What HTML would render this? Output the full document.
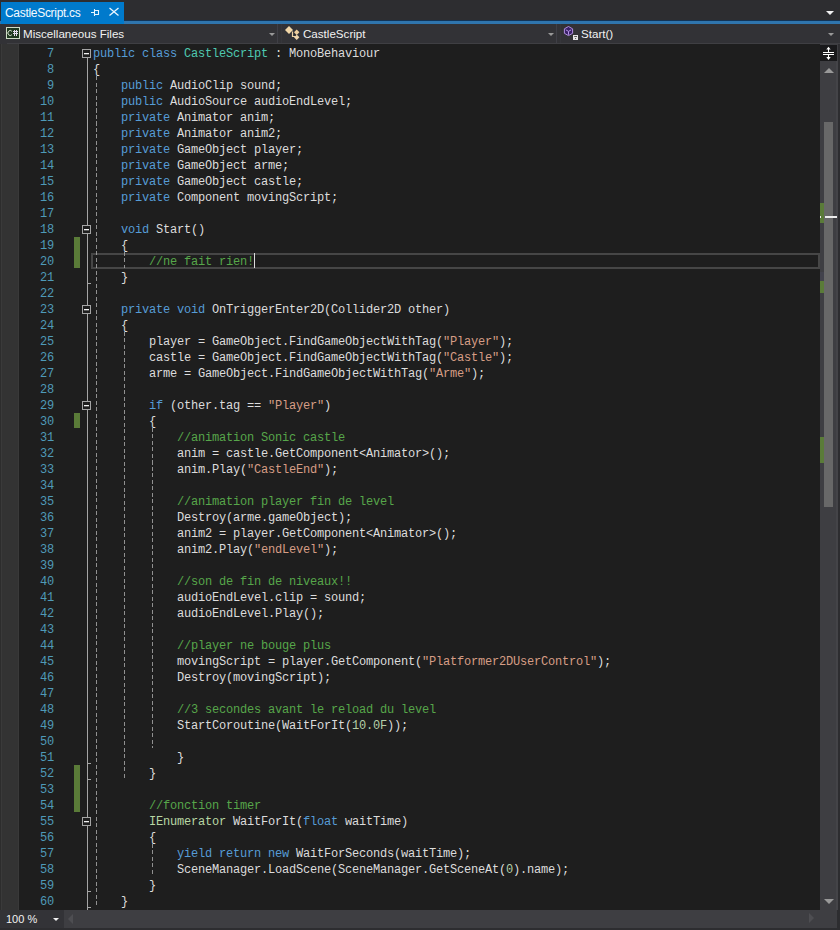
<!DOCTYPE html>
<html><head><meta charset="utf-8">
<style>
*{margin:0;padding:0;box-sizing:border-box}
html,body{width:840px;height:930px;overflow:hidden;background:#2d2d30}
body{position:relative;font-family:"Liberation Sans",sans-serif}
.abs{position:absolute}
/* tab bar */
#tabbar{position:absolute;left:0;top:0;width:840px;height:23px;background:#2d2d30}
#tab{position:absolute;left:1px;top:2px;width:123px;height:22px;background:#007acc}
#tabtxt{position:absolute;left:5px;top:6px;font-size:12px;letter-spacing:-0.3px;color:#f4faff;white-space:nowrap}
#tabline{position:absolute;left:0;top:21px;width:840px;height:3px;background:#2f75ae;border-top:1px solid #123456;top:20px;height:4px}
/* nav bar */
#nav{position:absolute;left:0;top:24px;width:840px;height:20px;background:#323236}
.navtxt{position:absolute;top:27px;font-size:11.6px;color:#f1f1f1;white-space:nowrap}
.sep{position:absolute;top:24px;width:1px;height:19px;background:#3f3f46}
.darr{position:absolute;width:0;height:0;border-left:3px solid transparent;border-right:3px solid transparent;border-top:3px solid #999}
/* editor */
#editor{position:absolute;left:19px;top:44px;width:801px;height:866px;background:#1e1e1e;overflow:hidden}
#glyph{position:absolute;left:0;top:44px;width:19px;height:866px;background:#333333;border-left:1px solid #2d2d2d}
#glyph2{position:absolute;left:1px;top:44px;width:18px;height:866px;border-left:1px solid #3a3a3a;border-right:1px solid #393939}
.ln{position:absolute;left:0;height:16px;width:820px;font-family:"Liberation Mono",monospace;font-size:12px;letter-spacing:-0.2px;line-height:16px;white-space:pre;color:#dcdcdc}
.num{position:absolute;right:766px;top:2px;color:#4f9ab8;text-align:right}
.code{position:absolute;left:93px;top:2px}
.k{color:#569cd6}.t{color:#4ec9b0}.c{color:#57a64a}.s{color:#d69d85}.n{color:#b5cea8}.i{color:#b8d7a3}
.guide{position:absolute;width:1px;background:repeating-linear-gradient(to bottom,#a5a5a5 0,#a5a5a5 4px,transparent 4px,transparent 6.5px);opacity:.85}
.ovl{position:absolute;left:87px;width:1px;background:#a5a5a5}
.obox{position:absolute;left:82px;width:9px;height:9px;border:1px solid #a5a5a5;background:#1e1e1e}
.ominus{position:absolute;left:1px;top:3px;width:5px;height:1px;background:#f0f0f0;box-shadow:0 0.5px 0 #9a9a9a}
.otick{position:absolute;left:87px;width:4px;height:1px;background:#a5a5a5}
.chg{position:absolute;left:74px;width:6px;background:#5a7b38}
#curline{position:absolute;left:91px;top:253px;width:729px;height:16px;border:2px solid #464646}
#caret{position:absolute;left:254px;top:253px;width:1px;height:15px;background:#dcdcdc}
/* vscroll */
#vsb{position:absolute;left:820px;top:44px;width:18px;height:866px;background:#3e3e42}
#vsbr{position:absolute;left:838px;top:44px;width:2px;height:886px;background:#2d2d30}
#vsbl{position:absolute;left:836px;top:61px;width:2px;height:849px;background:#444448}
#split{position:absolute;left:820px;top:45px;width:17px;height:16px;background:#19191b}
#thumb{position:absolute;left:824px;top:122px;width:9px;height:385px;background:#686868}
/* bottom */
#hsb{position:absolute;left:64px;top:910px;width:756px;height:18px;background:#3e3e42}
#zoom{position:absolute;left:0;top:910px;width:64px;height:18px;background:#333337}
#corner{position:absolute;left:820px;top:910px;width:17px;height:18px;background:#3e3e42}
#bottomline{position:absolute;left:0;top:928px;width:840px;height:2px;background:#2d2d30}
</style></head><body>
<div id="tabbar"></div>
<div id="tabline"></div>
<div id="tab"></div>
<div id="tabtxt">CastleScript.cs</div>
<!-- pin icon -->
<svg class="abs" style="left:90px;top:8px" width="10" height="9" viewBox="0 0 10 9"><path d="M1 4.5H4.5M4.5 1V8M4.5 2.5H8.5V6.5H4.5" stroke="#eaf6ff" stroke-width="1.1" fill="none"/></svg>
<!-- close X -->
<svg class="abs" style="left:108px;top:6px" width="12" height="12" viewBox="0 0 12 12"><path d="M1.5 2L10.5 9.5M10.5 2L1.5 9.5" stroke="#eaf6ff" stroke-width="1.3" fill="none"/></svg>
<div class="darr" style="left:826px;top:11px;border-left-width:4px;border-right-width:4px;border-top:4px solid #f1f1f1"></div>

<div id="nav"></div>
<div class="sep" style="left:277px"></div>
<div class="sep" style="left:281px;background:#36363b"></div>
<div class="sep" style="left:556px"></div>
<div class="sep" style="left:560px;background:#36363b"></div>
<!-- C# icon -->
<svg class="abs" style="left:6px;top:27px" width="14" height="12" viewBox="0 0 14 12"><rect x="0.5" y="0.5" width="13" height="11" fill="#1f381f" stroke="#cfdcc6" stroke-width="1"/><path d="M5.9 4.3A2.3 2.5 0 1 0 5.9 7.7" stroke="#dfe8d8" stroke-width="1" fill="none"/><path d="M8.5 3V9M10.5 3V9M7 4.5H12M7 6.5H12" stroke="#e4dcec" stroke-width="1" fill="none"/></svg>
<div class="navtxt" style="left:23px">Miscellaneous Files</div>
<div class="darr" style="left:269px;top:33px"></div>
<!-- class icon -->
<svg class="abs" style="left:282px;top:23px" width="20" height="20" viewBox="282 23 20 20"><path d="M285 30L289 26L293 30L289 34Z" fill="#f2d7a8"/><path d="M292.5 31.5V36.5H295" stroke="#efd3a5" stroke-width="1.2" fill="none"/><path d="M294 32.3L296.7 29.6L299.4 32.3L296.7 35Z" fill="#efcf9e"/><path d="M294 37.3L296.7 34.6L299.4 37.3L296.7 40Z" fill="#efd6ae"/><path d="M294.3 34.2L295.8 35.7" stroke="#1e1e1e" stroke-width="0.8"/></svg>
<div class="navtxt" style="left:303px">CastleScript</div>
<div class="darr" style="left:548px;top:33px"></div>
<!-- method icon -->
<svg class="abs" style="left:560px;top:23px" width="20" height="20" viewBox="560 23 20 20"><path d="M568.5 26.5L572.6 28.8V33.3L568.5 35.6L564.4 33.3V28.8Z" fill="#3a2168" stroke="#b18ee0" stroke-width="1"/><path d="M565.8 29.8L568.5 31.4L571.2 29.8M568.5 31.4V34.8" stroke="#b795e6" stroke-width="1" fill="none"/><rect x="573" y="35" width="5" height="5" fill="#e4e4e4"/><rect x="574.2" y="36.1" width="2.8" height="0.9" fill="#444"/><rect x="575.1" y="38" width="1" height="1" fill="#555"/></svg>
<div class="navtxt" style="left:581px">Start()</div>
<div class="darr" style="left:828px;top:33px"></div>

<div class="abs" style="left:7px;top:43px;width:833px;height:2px;background:#3f3f43"></div>
<div id="glyph"></div>
<div id="glyph2"></div>
<div id="editor"></div>
<div class="abs" style="left:0;top:0">
<div class="chg" style="top:237px;height:31px"></div>
<div class="chg" style="top:413px;height:15px"></div>
<div class="chg" style="top:765px;height:47px"></div>
<div id="curline"></div>
<div class="guide" style="left:96px;top:76px;height:832px"></div>
<div class="guide" style="left:124px;top:252px;height:16px"></div>
<div class="guide" style="left:124px;top:332px;height:448px"></div>
<div class="guide" style="left:152px;top:428px;height:320px"></div>
<div class="guide" style="left:152px;top:844px;height:32px"></div>
<div class="ovl" style="top:58px;height:852px"></div>
<div class="obox" style="top:49px"><div class="ominus"></div></div>
<div class="obox" style="top:225px"><div class="ominus"></div></div>
<div class="obox" style="top:305px"><div class="ominus"></div></div>
<div class="obox" style="top:401px"><div class="ominus"></div></div>
<div class="obox" style="top:817px"><div class="ominus"></div></div>
<div class="otick" style="top:283px"></div>
<div class="otick" style="top:763px"></div>
<div class="otick" style="top:779px"></div>
<div class="otick" style="top:891px"></div>
<div class="otick" style="top:907px"></div>
<div class="ln" style="top:44px"><span class="num">7</span><span class="code"><span class="k">public</span> <span class="k">class</span> <span class="t">CastleScript</span> : MonoBehaviour</span></div>
<div class="ln" style="top:60px"><span class="num">8</span><span class="code">{</span></div>
<div class="ln" style="top:76px"><span class="num">9</span><span class="code">    <span class="k">public</span> AudioClip sound;</span></div>
<div class="ln" style="top:92px"><span class="num">10</span><span class="code">    <span class="k">public</span> AudioSource audioEndLevel;</span></div>
<div class="ln" style="top:108px"><span class="num">11</span><span class="code">    <span class="k">private</span> Animator anim;</span></div>
<div class="ln" style="top:124px"><span class="num">12</span><span class="code">    <span class="k">private</span> Animator anim2;</span></div>
<div class="ln" style="top:140px"><span class="num">13</span><span class="code">    <span class="k">private</span> GameObject player;</span></div>
<div class="ln" style="top:156px"><span class="num">14</span><span class="code">    <span class="k">private</span> GameObject arme;</span></div>
<div class="ln" style="top:172px"><span class="num">15</span><span class="code">    <span class="k">private</span> GameObject castle;</span></div>
<div class="ln" style="top:188px"><span class="num">16</span><span class="code">    <span class="k">private</span> Component movingScript;</span></div>
<div class="ln" style="top:204px"><span class="num">17</span><span class="code"></span></div>
<div class="ln" style="top:220px"><span class="num">18</span><span class="code">    <span class="k">void</span> Start()</span></div>
<div class="ln" style="top:236px"><span class="num">19</span><span class="code">    {</span></div>
<div class="ln" style="top:252px"><span class="num">20</span><span class="code">        <span class="c">//ne fait rien!</span></span></div>
<div class="ln" style="top:268px"><span class="num">21</span><span class="code">    }</span></div>
<div class="ln" style="top:284px"><span class="num">22</span><span class="code"></span></div>
<div class="ln" style="top:300px"><span class="num">23</span><span class="code">    <span class="k">private</span> <span class="k">void</span> OnTriggerEnter2D(Collider2D other)</span></div>
<div class="ln" style="top:316px"><span class="num">24</span><span class="code">    {</span></div>
<div class="ln" style="top:332px"><span class="num">25</span><span class="code">        player = GameObject.FindGameObjectWithTag(<span class="s">&quot;Player&quot;</span>);</span></div>
<div class="ln" style="top:348px"><span class="num">26</span><span class="code">        castle = GameObject.FindGameObjectWithTag(<span class="s">&quot;Castle&quot;</span>);</span></div>
<div class="ln" style="top:364px"><span class="num">27</span><span class="code">        arme = GameObject.FindGameObjectWithTag(<span class="s">&quot;Arme&quot;</span>);</span></div>
<div class="ln" style="top:380px"><span class="num">28</span><span class="code"></span></div>
<div class="ln" style="top:396px"><span class="num">29</span><span class="code">        <span class="k">if</span> (other.tag == <span class="s">&quot;Player&quot;</span>)</span></div>
<div class="ln" style="top:412px"><span class="num">30</span><span class="code">        {</span></div>
<div class="ln" style="top:428px"><span class="num">31</span><span class="code">            <span class="c">//animation Sonic castle</span></span></div>
<div class="ln" style="top:444px"><span class="num">32</span><span class="code">            anim = castle.GetComponent&lt;Animator&gt;();</span></div>
<div class="ln" style="top:460px"><span class="num">33</span><span class="code">            anim.Play(<span class="s">&quot;CastleEnd&quot;</span>);</span></div>
<div class="ln" style="top:476px"><span class="num">34</span><span class="code"></span></div>
<div class="ln" style="top:492px"><span class="num">35</span><span class="code">            <span class="c">//animation player fin de level</span></span></div>
<div class="ln" style="top:508px"><span class="num">36</span><span class="code">            Destroy(arme.gameObject);</span></div>
<div class="ln" style="top:524px"><span class="num">37</span><span class="code">            anim2 = player.GetComponent&lt;Animator&gt;();</span></div>
<div class="ln" style="top:540px"><span class="num">38</span><span class="code">            anim2.Play(<span class="s">&quot;endLevel&quot;</span>);</span></div>
<div class="ln" style="top:556px"><span class="num">39</span><span class="code"></span></div>
<div class="ln" style="top:572px"><span class="num">40</span><span class="code">            <span class="c">//son de fin de niveaux!!</span></span></div>
<div class="ln" style="top:588px"><span class="num">41</span><span class="code">            audioEndLevel.clip = sound;</span></div>
<div class="ln" style="top:604px"><span class="num">42</span><span class="code">            audioEndLevel.Play();</span></div>
<div class="ln" style="top:620px"><span class="num">43</span><span class="code"></span></div>
<div class="ln" style="top:636px"><span class="num">44</span><span class="code">            <span class="c">//player ne bouge plus</span></span></div>
<div class="ln" style="top:652px"><span class="num">45</span><span class="code">            movingScript = player.GetComponent(<span class="s">&quot;Platformer2DUserControl&quot;</span>);</span></div>
<div class="ln" style="top:668px"><span class="num">46</span><span class="code">            Destroy(movingScript);</span></div>
<div class="ln" style="top:684px"><span class="num">47</span><span class="code"></span></div>
<div class="ln" style="top:700px"><span class="num">48</span><span class="code">            <span class="c">//3 secondes avant le reload du level</span></span></div>
<div class="ln" style="top:716px"><span class="num">49</span><span class="code">            StartCoroutine(WaitForIt(<span class="n">10.0F</span>));</span></div>
<div class="ln" style="top:732px"><span class="num">50</span><span class="code"></span></div>
<div class="ln" style="top:748px"><span class="num">51</span><span class="code">            }</span></div>
<div class="ln" style="top:764px"><span class="num">52</span><span class="code">        }</span></div>
<div class="ln" style="top:780px"><span class="num">53</span><span class="code"></span></div>
<div class="ln" style="top:796px"><span class="num">54</span><span class="code">        <span class="c">//fonction timer</span></span></div>
<div class="ln" style="top:812px"><span class="num">55</span><span class="code">        <span class="i">IEnumerator</span> WaitForIt(<span class="k">float</span> waitTime)</span></div>
<div class="ln" style="top:828px"><span class="num">56</span><span class="code">        {</span></div>
<div class="ln" style="top:844px"><span class="num">57</span><span class="code">            <span class="k">yield</span> <span class="k">return</span> <span class="k">new</span> WaitForSeconds(waitTime);</span></div>
<div class="ln" style="top:860px"><span class="num">58</span><span class="code">            SceneManager.LoadScene(SceneManager.GetSceneAt(<span class="n">0</span>).name);</span></div>
<div class="ln" style="top:876px"><span class="num">59</span><span class="code">        }</span></div>
<div class="ln" style="top:892px"><span class="num">60</span><span class="code">    }</span></div>
<div id="caret"></div>
</div>

<div id="vsb"></div>
<div id="vsbr"></div>
<div id="vsbl"></div>
<div id="split"></div>
<svg class="abs" style="left:820px;top:44px" width="17" height="17" viewBox="0 0 17 17"><path d="M3 8.5H14M3 10.5H14M8.5 5V8M8.5 11V13.5" stroke="#fff" stroke-width="1" fill="none"/><path d="M6.3 5.6L8.5 2.8L10.7 5.6Z M6.3 13L8.5 15.9L10.7 13Z" fill="#fff"/></svg>
<div class="abs" style="left:824px;top:68px;width:0;height:0;border-left:5px solid transparent;border-right:5px solid transparent;border-bottom:5px solid #999"></div>
<div id="thumb"></div>
<div class="abs" style="left:820px;top:203px;width:4px;height:20px;background:#5a7b38"></div>
<div class="abs" style="left:820px;top:281px;width:4px;height:12px;background:#5a7b38"></div>
<div class="abs" style="left:820px;top:437px;width:4px;height:26px;background:#5a7b38"></div>
<div class="abs" style="left:820px;top:216px;width:1px;height:2px;background:#e8e8e8"></div>
<div class="abs" style="left:825px;top:216px;width:12px;height:2px;background:#ececec"></div>
<div class="abs" style="left:820px;top:272px;width:4px;height:9px;background:#42424c"></div>
<div class="abs" style="left:824px;top:899px;width:0;height:0;border-left:5px solid transparent;border-right:5px solid transparent;border-top:5px solid #999"></div>

<div id="zoom"></div>
<div class="abs" style="left:6px;top:912.5px;font-size:11px;color:#f1f1f1;white-space:nowrap">100 %</div>
<div class="darr" style="left:53px;top:918px;border-left-width:3.5px;border-right-width:3.5px;border-top:3.5px solid #f1f1f1"></div>
<div id="hsb"></div>
<div class="abs" style="left:68px;top:914px;width:0;height:0;border-top:5px solid transparent;border-bottom:5px solid transparent;border-right:5px solid #4e4e52"></div>
<div class="abs" style="left:809px;top:913px;width:0;height:0;border-top:5px solid transparent;border-bottom:5px solid transparent;border-left:5px solid #4e4e52"></div>
<div id="corner"></div>
<div id="bottomline"></div>
</body></html>
